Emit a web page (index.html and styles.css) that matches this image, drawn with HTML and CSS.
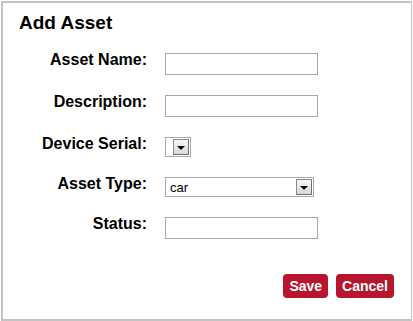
FILE: index.html
```
<!DOCTYPE html>
<html lang="en">
<head>
  <meta charset="UTF-8">
  <title>Add Asset</title>
  <link rel="stylesheet" href="styles.css">
</head>
<body>

  <!-- Add Asset dialog -->
  <div class="panel">
    <h2 class="title">Add Asset</h2>

    <div class="form-grid">
      <label for="assetName">Asset Name:</label>
      <input type="text" id="assetName" class="field">

      <label for="description">Description:</label>
      <input type="text" id="description" class="field">

      <label for="deviceSerial">Device Serial:</label>
      <div class="select select-small">
        <select id="deviceSerial"></select>
        <span class="arrow"></span>
      </div>

      <label for="assetType">Asset Type:</label>
      <div class="select select-wide">
        <select id="assetType">
          <option>car</option>
          <option>truck</option>
        </select>
        <span class="arrow"></span>
      </div>

      <label for="status">Status:</label>
      <input type="text" id="status" class="field">
    </div>

    <div class="actions">
      <button class="btn">Save</button>
      <button class="btn">Cancel</button>
    </div>
  </div>

</body>
</html>
```

FILE: styles.css
```
/* Global Styles */
body {
  font-family: "Liberation Sans", Arial, sans-serif;
  margin: 1px;
  background-color: white;
  color: black;
}

.panel {
  width: 412px;
  height: 320px;
  box-sizing: border-box;
  border: 2px solid #c3c3c3;
  padding: 9px 17px 0 16px;
}

.title {
  font-size: 19px;
  line-height: 22px;
  font-weight: bold;
  margin: 0 0 19px 0;
}

.form-grid {
  display: grid;
  grid-template-columns: 128px 153px;
  column-gap: 18px;
  row-gap: 20px;
  align-items: start;
}

.form-grid label {
  font-size: 16px;
  font-weight: bold;
  line-height: 16px;
  text-align: right;
  margin-top: -1px;
}

.field {
  height: 22px;
  width: 153px;
  box-sizing: border-box;
  border: 1px solid #a9a9a9;
  padding: 0 3px;
  margin: 0;
  font-family: "Liberation Sans", Arial, sans-serif;
  font-size: 13px;
}

/* Classic-looking dropdown */
.select {
  display: flex;
  height: 20px;
  box-sizing: border-box;
  border: 1px solid #a9a9a9;
  padding: 1px;
  background: white;
}

.select-small {
  width: 26px;
}

.select-wide {
  width: 149px;
}

.select select {
  appearance: none;
  -webkit-appearance: none;
  flex: 1;
  min-width: 0;
  border: none;
  background: transparent;
  padding: 0 0 0 3px;
  margin: 0;
  font-family: "Liberation Sans", Arial, sans-serif;
  font-size: 13px;
  color: black;
  outline: none;
}

.select .arrow {
  width: 16px;
  box-sizing: border-box;
  border: 1px solid #6e6e6e;
  border-top-color: #8a8a8a;
  border-left-color: #8a8a8a;
  background: linear-gradient(#f6f6f6, #d9d9d9);
  display: flex;
  justify-content: center;
  align-items: center;
}

.select .arrow::after {
  content: "";
  border-left: 4px solid transparent;
  border-right: 4px solid transparent;
  border-top: 4px solid black;
  margin-top: 1px;
}

.actions {
  display: flex;
  justify-content: flex-end;
  gap: 8px;
  margin-top: 35px;
}

.btn {
  background-color: #b8162f;
  color: white;
  border: none;
  border-radius: 4px;
  height: 24px;
  padding: 0 6px;
  font-family: "Liberation Sans", Arial, sans-serif;
  font-size: 14px;
  font-weight: bold;
  cursor: pointer;
}
```
